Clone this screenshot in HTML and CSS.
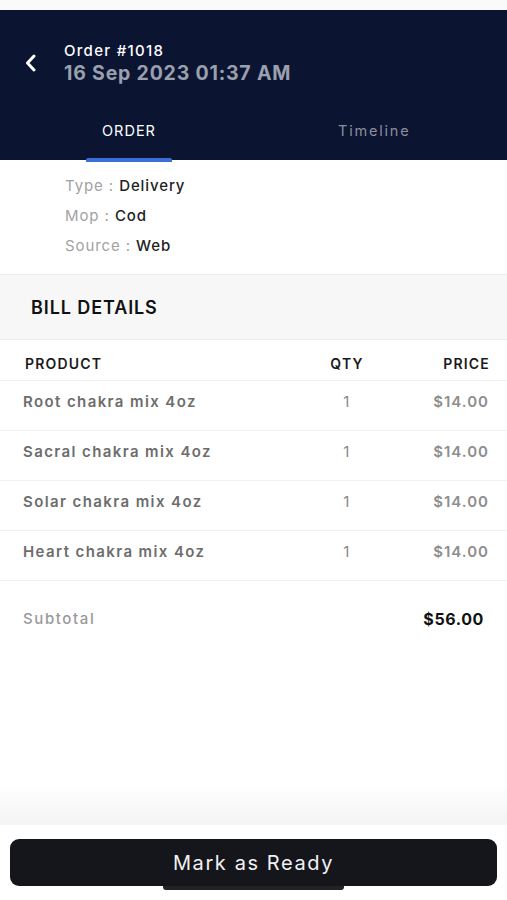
FILE: index.html
```html
<!DOCTYPE html>
<html>
<head>
<meta charset="utf-8">
<link rel="stylesheet" href="styles.css">
</head>
<body>
<div class="screen">
  <div class="statusbar"></div>
  <header class="header">
    <div class="titlebar">
      <svg class="back" width="14" height="18" viewBox="0 0 14 18"><path d="M10 2 L3.5 9 L10 16" fill="none" stroke="#fff" stroke-width="3" stroke-linecap="round" stroke-linejoin="round"/></svg>
      <div class="titles">
        <div class="order-no">Order #1018</div>
        <div class="order-date">16 Sep 2023 01:37 AM</div>
      </div>
    </div>
    <nav class="tabs">
      <div class="tab active"><span>ORDER</span></div>
      <div class="tab"><span>Timeline</span></div>
    </nav>
  </header>
  <section class="info">
    <div class="info-row"><span class="lbl">Type : </span><span class="val">Delivery</span></div>
    <div class="info-row"><span class="lbl">Mop : </span><span class="val">Cod</span></div>
    <div class="info-row"><span class="lbl">Source : </span><span class="val">Web</span></div>
  </section>
  <div class="bill-head">BILL DETAILS</div>
  <div class="table">
    <div class="row thead"><span class="c-prod">PRODUCT</span><span class="c-qty">QTY</span><span class="c-price">PRICE</span></div>
    <div class="row item"><span class="c-prod">Root chakra mix 4oz</span><span class="c-qty">1</span><span class="c-price">$14.00</span></div>
    <div class="row item"><span class="c-prod">Sacral chakra mix 4oz</span><span class="c-qty">1</span><span class="c-price">$14.00</span></div>
    <div class="row item"><span class="c-prod">Solar chakra mix 4oz</span><span class="c-qty">1</span><span class="c-price">$14.00</span></div>
    <div class="row item"><span class="c-prod">Heart chakra mix 4oz</span><span class="c-qty">1</span><span class="c-price">$14.00</span></div>
  </div>
  <div class="subtotal"><span class="st-lbl">Subtotal</span><span class="st-val">$56.00</span></div>
  <div class="spacer"></div>
  <footer class="footer">
    <button class="ready">Mark as Ready</button>
    <div class="home-ind"></div>
  </footer>
</div>
</body>
</html>
```
FILE: styles.css
```css
* { box-sizing: border-box; }
html, body { margin: 0; padding: 0; background: #fff; }
body { font-family: "Inter", "Noto Sans", sans-serif; }
.screen { width: 507px; height: 900px; display: flex; flex-direction: column; overflow: hidden; }
.statusbar { height: 10px; background: #fafafa; }
.header { background: #0b1431; height: 150px; display: flex; flex-direction: column; }
.titlebar { display: flex; align-items: flex-start; padding: 32px 0 0 24px; height: 100px; }
.back { margin-top: 12px; width: 14px; height: 18px; }
.titles { margin-left: 26px; }
.order-no { color: #fff; font-size: 15px; font-weight: 500; line-height: 18px; letter-spacing: 1.3px; }
.order-date { color: #9aa0ad; font-size: 19.5px; font-weight: 700; line-height: 26px; letter-spacing: 0.8px; }
.tabs { display: flex; height: 50px; }
.tab { flex: 1; display: flex; align-items: flex-start; padding-top: 12px; color: #8b909c; font-size: 14.5px; position: relative; letter-spacing: 1px; }
.tab:first-child { padding-left: 102px; }
.tab:last-child { padding-left: 67px; letter-spacing: 1.8px; }
.tab.active { color: #fff; }
.tab.active span { position: relative; }
.tab.active span::after { content: ""; position: absolute; left: -16px; right: -16px; top: 36px; height: 4px; background: #3c6fd6; border-radius: 2px 2px 0 0; }
.info { padding: 11px 0 10px 65px; height: 115px; border-bottom: 1px solid #ececec; }
.info-row { font-size: 15px; line-height: 30px; height: 30px; letter-spacing: 0.9px; }
.lbl { color: #a2a2a2; }
.val { color: #222; font-weight: 500; }
.bill-head { background: #f7f7f7; height: 65px; padding-left: 31px; display: flex; align-items: center; font-size: 18px; font-weight: 600; color: #111; border-bottom: 1px solid #ececec; letter-spacing: 0.9px; }
.table { display: flex; flex-direction: column; }
.row { display: grid; grid-template-columns: 1fr 60px 112px; align-items: center; padding: 0 18px 0 23px; border-bottom: 1px solid #f0f0f0; }
.thead { height: 41px; padding-left: 25px; padding-top: 6px; font-size: 14px; font-weight: 600; color: #1a1a1a; letter-spacing: 1.2px; }
.item { height: 50px; padding-bottom: 8px; font-size: 15px; font-weight: 600; color: #6d6d6d; letter-spacing: 1.4px; }
.c-qty { text-align: center; }
.c-price { text-align: right; }
.thead .c-price { margin-right: -1px; }
.item .c-price { color: #8e8e8e; font-weight: 600; letter-spacing: 1px; }
.item .c-qty { color: #888; font-weight: 400; }
.subtotal { display: flex; justify-content: space-between; align-items: center; height: 75px; padding: 0 23px 0 23px; }
.st-lbl { color: #999; font-size: 15px; font-weight: 500; letter-spacing: 1.6px; }
.st-val { color: #111; font-size: 16px; font-weight: 700; letter-spacing: 0.6px; }
.spacer { flex: 1; background: linear-gradient(#fff 0, #fff 75%, #f4f4f4 100%); }
.footer { height: 75px; background: #fff; position: relative; padding: 14px 10px 0 10px; border-radius: 10px 10px 0 0; }
.ready { width: 100%; height: 47px; background: #15161c; color: #f2f2f2; border: none; border-radius: 9px; font-family: "Inter", "Noto Sans", sans-serif; font-size: 20px; font-weight: 400; letter-spacing: 1.6px; }
.home-ind { position: absolute; left: 163px; width: 181px; top: 61px; height: 4px; background: #222; border-radius: 0 0 3px 3px; }
```
